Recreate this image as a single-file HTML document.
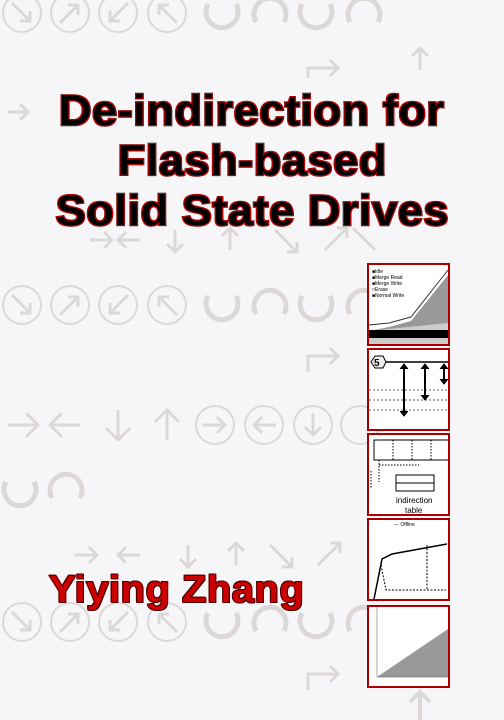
<!DOCTYPE html>
<html><head><meta charset="utf-8"><style>
body{margin:0;width:504px;height:720px;overflow:hidden;background:#f6f6f8;position:relative;font-family:"Liberation Sans",sans-serif}
svg.bg{position:absolute;left:0;top:0}
.t{position:absolute;left:0;width:504px;text-align:center;line-height:1}
.t span{display:inline-block;transform:scaleX(1.05);font-weight:bold;font-size:43px;color:#000;-webkit-text-stroke:2.4px #000;paint-order:stroke fill;letter-spacing:0.5px;text-shadow:1px 0 #b00,-1px 0 #b00,0 1px #b00,0 -1px #b00,1px 1px #b00,-1px -1px #b00,1px -1px #b00,-1px 1px #b00}
.a{position:absolute;left:49px;top:571px;transform:scaleX(1.05);transform-origin:left;font-weight:bold;font-size:38px;color:#c00;-webkit-text-stroke:2px #c00;paint-order:stroke fill;letter-spacing:0.5px;line-height:1;text-shadow:1px 0 #400,-1px 0 #400,0 1px #400,0 -1px #400,1px 1px #400,-1px -1px #400}
.box{position:absolute;left:367px;width:79px;height:79px;border:2px solid #a00;background:#fff;overflow:hidden}
</style></head><body>
<svg class="bg" width="504" height="720" fill="none" stroke="#ddd8d8" stroke-width="3">
<g id="c">
<circle cx="22" cy="305" r="19" stroke-width="2"/><circle cx="70" cy="305" r="19" stroke-width="2"/><circle cx="118" cy="305" r="19" stroke-width="2"/><circle cx="167" cy="305" r="19" stroke-width="2"/>
<path d="M12 295l18 18m-10 0h10v-10M60 315l18-18m-10 0h10v10M128 295l-18 18m10 0h-10v-10M177 315l-18-18m10 0h-10v10"/>
<path d="M208 296a16 16 0 1 0 28 0M256 314a16 16 0 1 1 28 0M302 296a16 16 0 1 0 28 0M350 314a16 16 0 1 1 28 0" stroke-width="5"/>
</g>
<use href="#c" y="317"/><use href="#c" y="-292"/>
<g>
<path d="M8 425h30m-12-12 12 12-12 12M80 425h-30m12-12-12 12 12 12M118 410v30m-12-12 12 12 12-12M167 440v-30m-12 12 12-12 12 12"/>
<circle cx="215" cy="425" r="19" stroke-width="2"/><circle cx="264" cy="425" r="19" stroke-width="2"/><circle cx="313" cy="425" r="19" stroke-width="2"/><circle cx="360" cy="425" r="19" stroke-width="2"/>
<path d="M203 425h22m-8-8 8 8-8 8M276 425h-22m8-8-8 8 8 8M313 413v22m-8-8 8 8 8-8"/>
<path d="M6 482a16 16 0 1 0 28 0M52 498a16 16 0 1 1 28 0" stroke-width="5"/>
<path d="M75 555h22m-8-8 8 8-8 8M140 555h-22m8-8-8 8 8 8M188 545v22m-8-8 8 8 8-8M236 565v-22m-8 8 8-8 8 8M270 545l22 22m-10 0h10v-10M318 565l22-22m-10 0h10v10"/>
<path d="M308 690v-16h30m-8-8 8 8-8 8M308 372v-16h30m-8-8 8 8-8 8M308 78v-10h30m-8-8 8 8-8 8"/>
<path d="M420 70v-22m-8 8 8-8 8 8M90 240h22m-8-8 8 8-8 8M140 240h-22m8-8-8 8 8 8M175 230v22m-8-8 8 8 8-8M230 250v-22m-8 8 8-8 8 8M275 230l22 22m-10 0h10v-10M325 250l22-22m-10 0h10v10M375 250l-22-22M8 112h20m-8-8 8 8-8 8"/>
<path d="M420 385v-28m-10 10 10-10 10 10M420 720v-28m-10 10 10-10 10 10" stroke-width="4"/>
</g>
</svg>
<div class="t" style="top:90px"><span>De-indirection for</span></div>
<div class="t" style="top:140px"><span>Flash-based</span></div>
<div class="t" style="top:190px"><span>Solid State Drives</span></div>
<div class="a">Yiying Zhang</div>

<div class="box" style="top:263px"><svg width="79" height="79" font-size="5" font-family="Liberation Sans">
<polygon points="0,66 20,62 42,56 79,10 79,79 0,79" fill="#999"/><polygon points="0,66 79,58 79,79 0,79" fill="#ccc"/><rect y="65" width="79" height="8" fill="#000"/>
<polyline points="0,60 20,58 42,52 79,5" stroke="#333" fill="none"/>
<text x="3" y="8">■Idle</text><text x="3" y="14">■Merge Read</text><text x="3" y="20">■Merge Write</text><text x="3" y="26">□Erase</text><text x="3" y="32">■Normal Write</text></svg></div>
<div class="box" style="top:348px"><svg width="79" height="79" stroke="#000" fill="none">
<polygon points="2,12 6,6 14,6 17,12 14,18 6,18" fill="#eee"/><text x="5" y="16" font-size="10" font-weight="bold" fill="#000" stroke="none">5</text>
<line x1="17" y1="12" x2="79" y2="12" stroke-width="1.5"/><path d="M0 40h79M0 50h79M0 60h79" stroke-dasharray="2 2" stroke="#666"/>
<path d="M35 14v52M56 14v36M75 14v20" stroke-width="2"/><path d="M31 19l4-5 4 5M31 61l4 5 4-5M52 19l4-5 4 5M52 45l4 5 4-5M71 19l4-5 4 5M71 29l4 5 4-5" fill="#000"/></svg></div>
<div class="box" style="top:433px"><svg width="79" height="79" stroke="#000" fill="none" font-size="5">
<rect x="5" y="5" width="76" height="20"/><path d="M24 5v20M43 5v20M62 5v20M10 25v22M10 30h40M2 36v17" stroke-dasharray="1.5 1.5"/>
<rect x="27" y="40" width="38" height="8"/><rect x="27" y="48" width="38" height="8"/>
<text x="27" y="68" font-size="8" fill="#000" stroke="none" font-family="Liberation Sans">indirection</text><text x="36" y="78" font-size="8" fill="#000" stroke="none" font-family="Liberation Sans">table</text></svg></div>
<div class="box" style="top:518px"><svg width="79" height="79" stroke="#000" fill="none">
<path d="M5 79l8-40 10-5 55-10" stroke-width="1.5"/><path d="M12 45l5 25h60M58 25v45" stroke-dasharray="2 1.5"/><text x="25" y="6" font-size="5" stroke="none" fill="#000">--- Offline</text></svg></div>
<div class="box" style="top:605px"><svg width="79" height="79"><polygon points="8,70 79,22 79,70" fill="#999"/><path d="M8 0v70h71" stroke="#555" fill="none" stroke-width=".5"/></svg></div>
</body></html>
